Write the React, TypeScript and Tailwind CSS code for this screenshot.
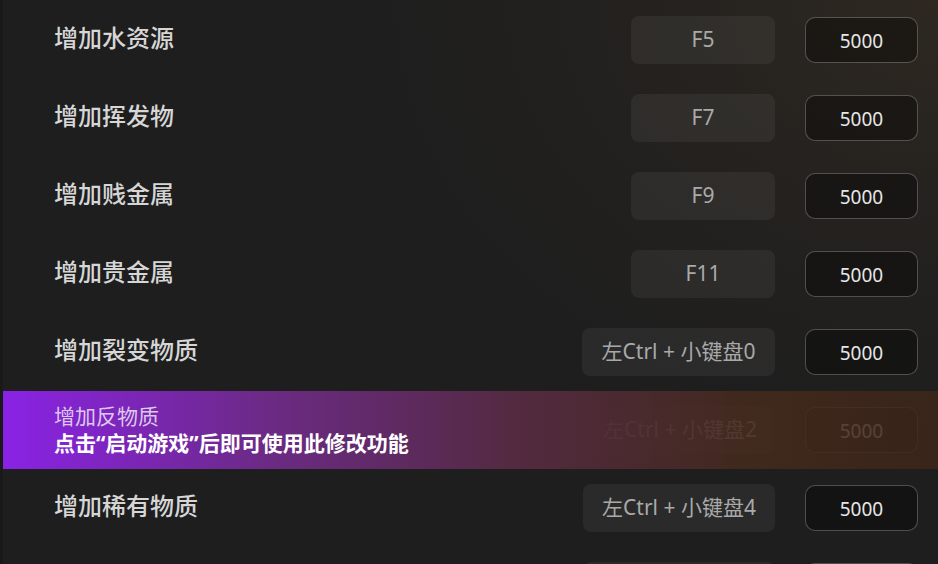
import React from "react";

type Row = { label: string; key: string; w: number };

const rows: Row[] = [
  { label: "增加水资源", key: "F5", w: 144 },
  { label: "增加挥发物", key: "F7", w: 144 },
  { label: "增加贱金属", key: "F9", w: 144 },
  { label: "增加贵金属", key: "F11", w: 144 },
  { label: "增加裂变物质", key: "左Ctrl + 小键盘0", w: 193 },
  { label: "增加反物质", key: "左Ctrl + 小键盘2", w: 190 },
  { label: "增加稀有物质", key: "左Ctrl + 小键盘4", w: 192 },
  { label: "增加奇异物质", key: "左Ctrl + 小键盘6", w: 192 },
];

const font = { fontFamily: '"Noto Sans", "Noto Sans CJK SC", sans-serif' };

function RowView({ r, banner }: { r: Row; banner?: boolean }) {
  return (
    <div className="relative flex h-[78px] items-center pl-[51px] pr-[20px]">
      <div
        className={
          "flex-1 pb-[4px] text-[24px] font-medium leading-none text-[#d6d6d6] " +
          (banner ? "invisible" : "")
        }
      >
        {r.label}
      </div>
      <div
        className="flex h-[48px] items-center justify-center rounded-[8px] bg-white/[0.055] pb-[1px] text-[21px] text-[#a9a9a9]"
        style={{ width: r.w }}
      >
        {r.key}
      </div>
      <div className="ml-[30px] flex h-[46px] w-[113px] items-center justify-center rounded-[10px] border border-white/25 bg-black/35 pt-[3px] text-[19px] text-[#e6e6e6]">
        5000
      </div>
      {banner && (
        <div className="absolute inset-0 flex flex-col justify-center bg-[linear-gradient(90deg,#8a22e6_0%,#6c2a86_28%,#532a40_55%,rgba(68,42,28,0.88)_80%,rgba(62,38,26,0.86)_100%)] pl-[51px]">
          <div className="text-[21px] leading-[27px] text-[#dcc8ee]">增加反物质</div>
          <div className="text-[21px] font-bold leading-[27px] text-white">点击“启动游戏”后即可使用此修改功能</div>
        </div>
      )}
    </div>
  );
}

export default function App() {
  return (
    <div
      className="flex h-[564px] w-[938px] overflow-hidden bg-[#1e1e1e]"
      style={font}
    >
      <div className="w-[3px] shrink-0 bg-[#191919]" />
      <div className="relative flex-1 bg-[radial-gradient(ellipse_70%_90%_at_100%_0%,#2e2821_0%,#25221f_40%,#1e1e1e_85%)] pt-[1px]">
        {rows.map((r, i) => (
          <RowView key={i} r={r} banner={i === 5} />
        ))}
      </div>
    </div>
  );
}
